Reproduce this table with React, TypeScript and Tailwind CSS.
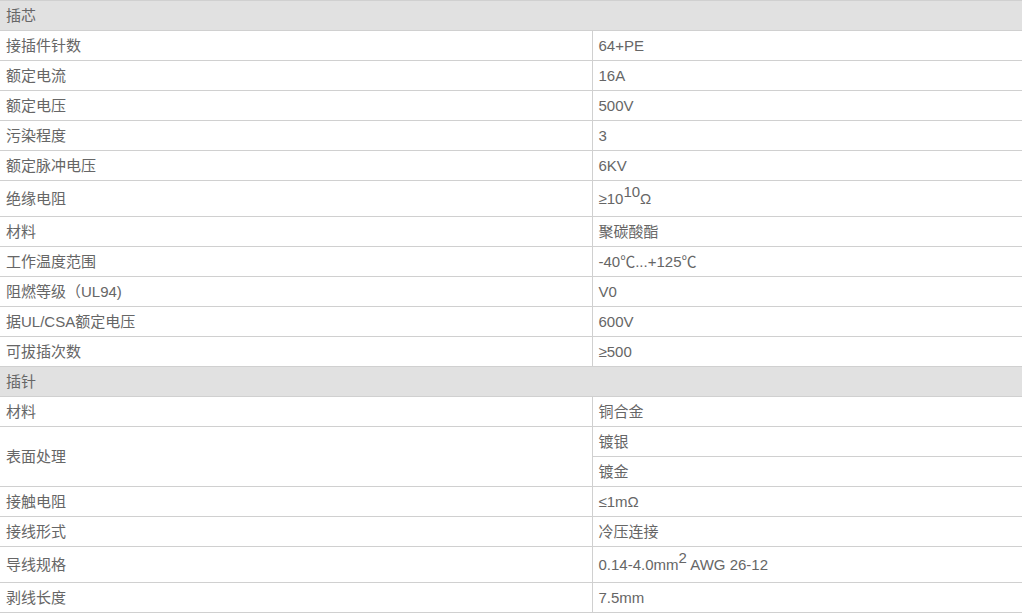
type Row = { label: string; values: React.ReactNode[]; tall?: boolean };

const core: Row[] = [
  { label: '接插件针数', values: ['64+PE'] },
  { label: '额定电流', values: ['16A'] },
  { label: '额定电压', values: ['500V'] },
  { label: '污染程度', values: ['3'] },
  { label: '额定脉冲电压', values: ['6KV'] },
  {
    label: '绝缘电阻',
    values: [
      <>
        ≥10<sup className="text-[15px] -top-[7px]">10</sup>Ω
      </>,
    ],
    tall: true,
  },
  { label: '材料', values: ['聚碳酸酯'] },
  { label: '工作温度范围', values: ['-40℃...+125℃'] },
  { label: '阻燃等级（UL94)', values: ['V0'] },
  { label: '据UL/CSA额定电压', values: ['600V'] },
  { label: '可拔插次数', values: ['≥500'] },
];

const pin: Row[] = [
  { label: '材料', values: ['铜合金'] },
  { label: '表面处理', values: ['镀银', '镀金'] },
  { label: '接触电阻', values: ['≤1mΩ'] },
  { label: '接线形式', values: ['冷压连接'] },
  {
    label: '导线规格',
    values: [
      <>
        0.14-4.0mm<sup className="text-[15px] -top-[7px]">2</sup> AWG 26-12
      </>,
    ],
    tall: true,
  },
  { label: '剥线长度', values: ['7.5mm'] },
];

const cell = 'border-b border-[#d0d0d0] px-[6px] py-0 text-left align-middle font-normal';

function Section({ title, rows }: { title: string; rows: Row[] }) {
  return (
    <>
      <tr className="h-[30px] bg-[#e1e1e1]">
        <td colSpan={2} className={cell}>{title}</td>
      </tr>
      {rows.map((r, i) =>
        r.values.map((v, j) => (
          <tr key={`${i}-${j}`} className={r.tall ? 'h-[36px]' : 'h-[30px]'}>
            {j === 0 && (
              <td rowSpan={r.values.length} className={`${cell} w-[592px] border-r`}>
                {r.label}
              </td>
            )}
            <td className={cell}>{v}</td>
          </tr>
        ))
      )}
    </>
  );
}

export default function App() {
  return (
    <div className="w-[1022px] bg-white">
      <table
        className="w-full border-collapse border-t border-[#d0d0d0] text-[15px] leading-[20px] text-[#666]"
        style={{ fontFamily: '"Liberation Sans", "Noto Sans CJK SC", sans-serif' }}
      >
        <tbody>
          <Section title="插芯" rows={core} />
          <Section title="插针" rows={pin} />
        </tbody>
      </table>
    </div>
  );
}
